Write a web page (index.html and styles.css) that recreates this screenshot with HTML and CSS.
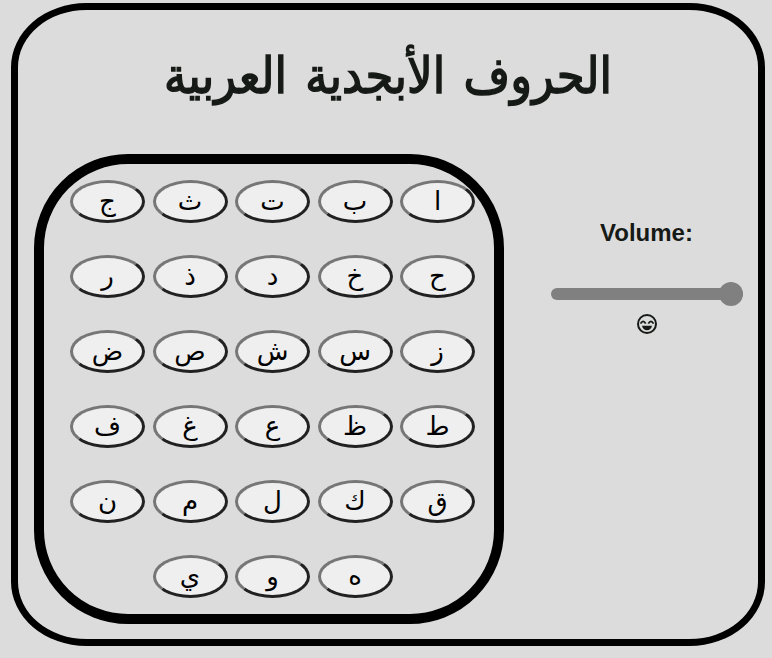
FILE: index.html
```html
<!DOCTYPE html>
<html lang="ar">
<head>
<meta charset="utf-8">
<title>الحروف الأبجدية العربية</title>
<link rel="stylesheet" href="styles.css">
</head>
<body>
<main class="frame">
  <h1 class="title" dir="rtl">الحروف الأبجدية العربية</h1>
  <div class="content">
    <section class="letters" dir="rtl">
      <button>ا</button><button>ب</button><button>ت</button><button>ث</button><button>ج</button>
      <button>ح</button><button>خ</button><button>د</button><button>ذ</button><button>ر</button>
      <button>ز</button><button>س</button><button>ش</button><button>ص</button><button>ض</button>
      <button>ط</button><button>ظ</button><button>ع</button><button>غ</button><button>ف</button>
      <button>ق</button><button>ك</button><button>ل</button><button>م</button><button>ن</button>
      <button>ه</button><button>و</button><button>ي</button>
    </section>
    <aside class="volume">
      <label class="volume-label" for="volume">Volume:</label>
      <input class="slider" id="volume" type="range" min="0" max="100" value="100">
      <svg class="face" viewBox="0 0 22 22" fill="none" stroke="#161a16" stroke-width="2">
        <circle cx="11" cy="11" r="9"/>
        <path d="M4.5 10.6q2.7-4.4 5.2 0M12.3 10.6q2.7-4.4 5.2 0" stroke-width="1.8"/>
        <path d="M6 12.8h10q-1 4.4-5 4.4t-5-4.4z" fill="#161a16" stroke="none"/>
      </svg>
    </aside>
  </div>
</main>
</body>
</html>
```
FILE: styles.css
```css
* { box-sizing: border-box; }
body {
  margin: 0;
  background: #dcdcdc;
  color: #161a16;
  font-family: "Liberation Sans", Arial, sans-serif;
}
.frame {
  width: 754px;
  height: 643px;
  margin: 3px 0 0 11px;
  border: 7px solid #000;
  border-radius: 10%;
}
.title {
  height: 144px;
  margin: 0;
  padding-top: 31px;
  font: 400 50px/70px "DejaVu Sans", sans-serif;
  font-stretch: semi-condensed;
  word-spacing: 4px;
  -webkit-text-stroke: 1.4px currentColor;
  text-align: center;
}
.content { display: flex; }
.letters {
  display: flex;
  flex-wrap: wrap;
  justify-content: center;
  align-content: flex-start;
  gap: 32px 7.5px;
  width: 470px;
  height: 470px;
  margin-left: 16px;
  padding: 16px 17px 16px 24px;
  border: 10px solid #000;
  border-radius: 20%;
}
.letters button {
  width: 75px;
  height: 43px;
  padding: 0;
  border: 3px solid;
  border-color: #767676 #212121 #212121 #767676;
  border-radius: 50%;
  background: #efefef;
  color: #000;
  font: 26px/37px "Liberation Serif", "DejaVu Sans", serif;
}
.volume {
  display: flex;
  flex-direction: column;
  align-items: center;
  width: 192px;
  margin: 65px 0 0 47px;
}
.volume-label {
  margin-right: 1px;
  font-size: 24px;
  font-weight: 700;
  line-height: 28px;
}
.slider {
  width: 192px;
  height: 24px;
  margin: 35px 0 0;
  appearance: none;
  background: transparent;
}
.slider::-webkit-slider-runnable-track {
  height: 12px;
  border-radius: 6px;
  background: #808080;
}
.slider::-webkit-slider-thumb {
  width: 24px;
  height: 24px;
  margin-top: -6px;
  appearance: none;
  border-radius: 50%;
  background: #808080;
}
.face { width: 22px; height: 22px; margin-top: 7px; }
```
